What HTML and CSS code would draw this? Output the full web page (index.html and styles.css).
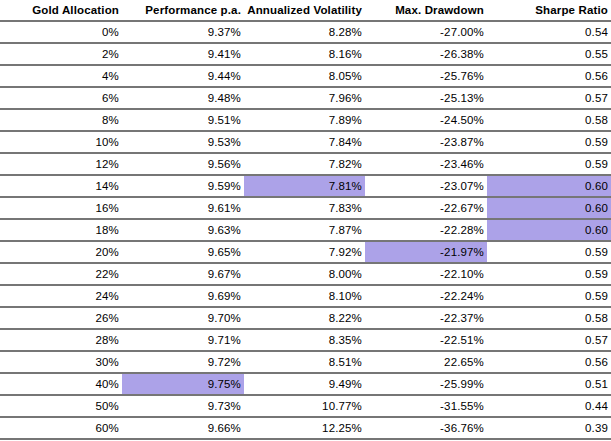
FILE: index.html
```html
<!DOCTYPE html>
<html>
<head>
<meta charset="utf-8">
<link rel="stylesheet" href="styles.css">
</head>
<body>
<table class="grid">
  <colgroup>
    <col class="c1"><col class="c2"><col class="c3"><col class="c4"><col class="c5">
  </colgroup>
  <thead>
    <tr><th>Gold Allocation</th><th>Performance p.a.</th><th>Annualized Volatility</th><th>Max. Drawdown</th><th>Sharpe Ratio</th></tr>
  </thead>
  <tbody>
    <tr><td>0%</td><td>9.37%</td><td>8.28%</td><td>-27.00%</td><td>0.54</td></tr>
    <tr><td>2%</td><td>9.41%</td><td>8.16%</td><td>-26.38%</td><td>0.55</td></tr>
    <tr><td>4%</td><td>9.44%</td><td>8.05%</td><td>-25.76%</td><td>0.56</td></tr>
    <tr><td>6%</td><td>9.48%</td><td>7.96%</td><td>-25.13%</td><td>0.57</td></tr>
    <tr><td>8%</td><td>9.51%</td><td>7.89%</td><td>-24.50%</td><td>0.58</td></tr>
    <tr><td>10%</td><td>9.53%</td><td>7.84%</td><td>-23.87%</td><td>0.59</td></tr>
    <tr><td>12%</td><td>9.56%</td><td>7.82%</td><td>-23.46%</td><td>0.59</td></tr>
    <tr><td>14%</td><td>9.59%</td><td class="hl">7.81%</td><td>-23.07%</td><td class="hl">0.60</td></tr>
    <tr><td>16%</td><td>9.61%</td><td>7.83%</td><td>-22.67%</td><td class="hl">0.60</td></tr>
    <tr><td>18%</td><td>9.63%</td><td>7.87%</td><td>-22.28%</td><td class="hl">0.60</td></tr>
    <tr><td>20%</td><td>9.65%</td><td>7.92%</td><td class="hl">-21.97%</td><td>0.59</td></tr>
    <tr><td>22%</td><td>9.67%</td><td>8.00%</td><td>-22.10%</td><td>0.59</td></tr>
    <tr><td>24%</td><td>9.69%</td><td>8.10%</td><td>-22.24%</td><td>0.59</td></tr>
    <tr><td>26%</td><td>9.70%</td><td>8.22%</td><td>-22.37%</td><td>0.58</td></tr>
    <tr><td>28%</td><td>9.71%</td><td>8.35%</td><td>-22.51%</td><td>0.57</td></tr>
    <tr><td>30%</td><td>9.72%</td><td>8.51%</td><td>22.65%</td><td>0.56</td></tr>
    <tr><td>40%</td><td class="hl">9.75%</td><td>9.49%</td><td>-25.99%</td><td>0.51</td></tr>
    <tr><td>50%</td><td>9.73%</td><td>10.77%</td><td>-31.55%</td><td>0.44</td></tr>
    <tr><td>60%</td><td>9.66%</td><td>12.25%</td><td>-36.76%</td><td>0.39</td></tr>
  </tbody>
</table>
</body>
</html>
```
FILE: styles.css
```css
html, body {
  margin: 0;
  padding: 0;
  background: #ffffff;
}
.grid {
  border-collapse: collapse;
  table-layout: fixed;
  width: 611px;
  font-family: "Liberation Sans", Arial, sans-serif;
  font-size: 11.5px;
  letter-spacing: 0.15px;
  color: #000;
}
.c1 { width: 122px; }
.c2 { width: 122px; }
.c3 { width: 121px; }
.c4 { width: 122px; }
.c5 { width: 124px; }
.grid th, .grid td {
  text-align: right;
  padding: 0 3px 0 0;
  border-bottom: 2px solid #767676;
  white-space: nowrap;
  line-height: 13px;
}
.grid th {
  font-weight: bold;
  height: 21px;
  box-sizing: border-box;
  vertical-align: middle;
}
.grid td {
  height: 20px;
  vertical-align: middle;
}
.grid .hl {
  background: #aca2e8;
}
```
